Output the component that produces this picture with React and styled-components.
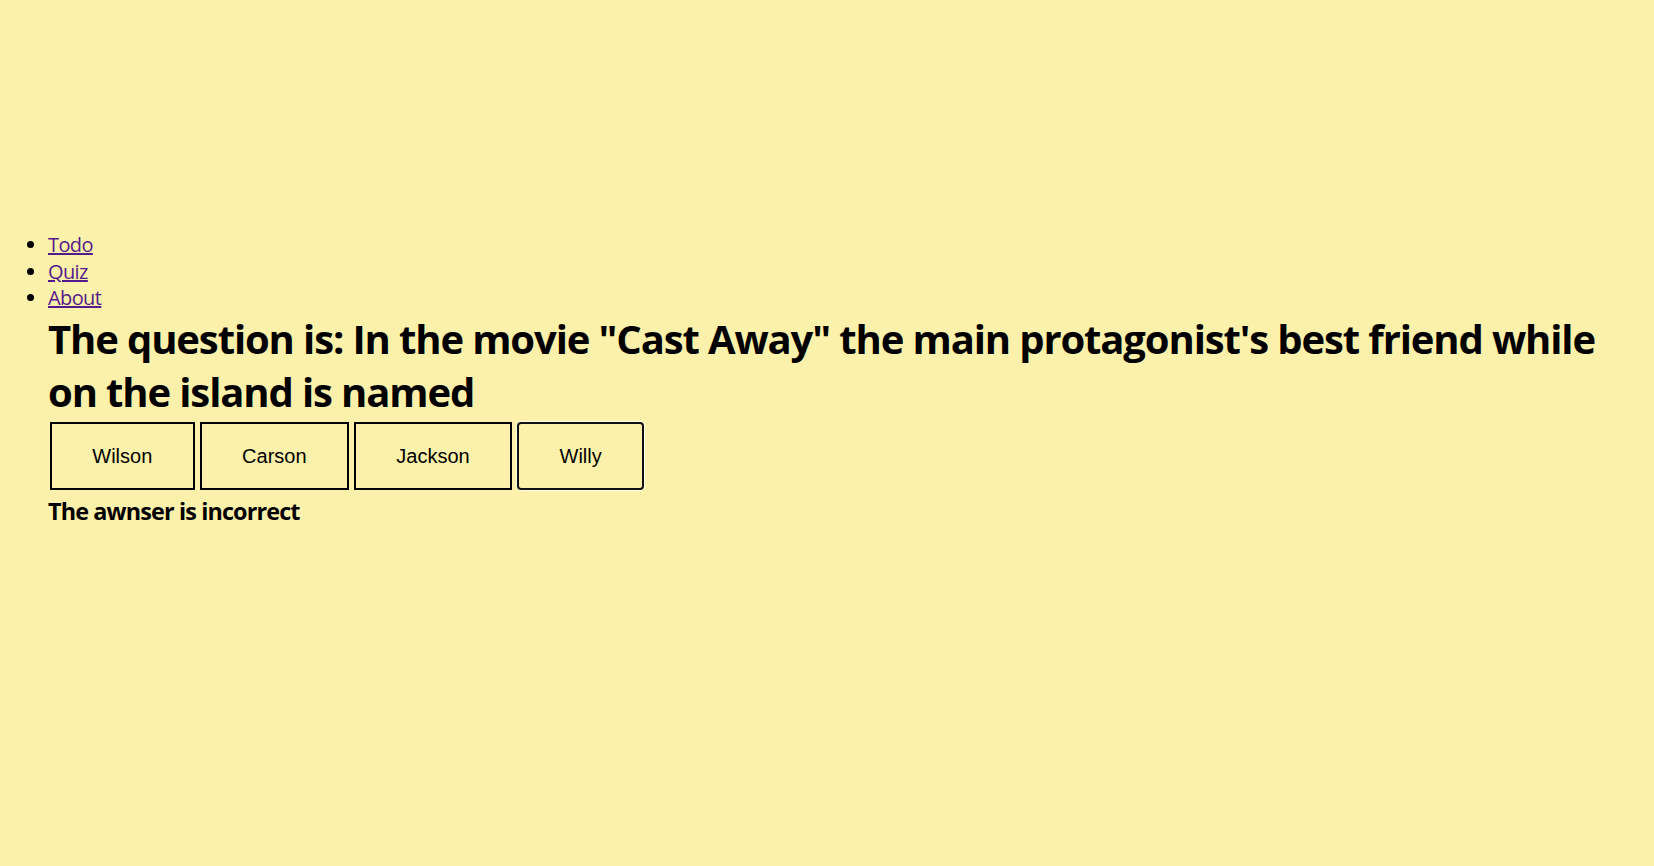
import React from "react";
import styled, { createGlobalStyle } from "styled-components";

const GlobalStyle = createGlobalStyle`
  body {
    margin: 0;
    background: #fcf1aa;
    font-family: "Open Sans", "Noto Sans", sans-serif;
    color: #000;
  }
`;

const Page = styled.div`
  min-height: 866px;
  box-sizing: border-box;
  padding: 232px 8px 8px;
`;

const NavList = styled.ul`
  margin: 0;
  padding-left: 40px;
  list-style: disc;
`;

const NavItem = styled.li`
  font-size: 20px;
  line-height: 26.6px;
`;

const NavLink = styled.a`
  color: #551a8b;
  text-decoration: underline;
  letter-spacing: -0.6px;
`;

const Quiz = styled.section`
  margin-left: 40px;
`;

const Question = styled.h1`
  margin: 0;
  font-size: 40px;
  font-weight: 700;
  line-height: 53.3px;
  letter-spacing: -1.12px;
`;

const Choices = styled.div`
  display: flex;
  gap: 5.2px;
  padding-left: 2px;
  margin-top: 4px;
`;

const Choice = styled.button`
  box-sizing: border-box;
  margin: 0;
  padding: 20.5px 40.3px;
  font-family: "Liberation Sans", Arial, sans-serif;
  font-size: 20px;
  line-height: 23px;
  color: #000;
  background: transparent;
  border: 2px solid ${(p) => (p.$focused ? "#101010" : "#000")};
  border-radius: ${(p) => (p.$focused ? "4px" : "0")};
  box-shadow: ${(p) => (p.$focused ? "0 0 0 1px rgba(255,255,255,0.85)" : "none")};
  cursor: pointer;
`;

const Result = styled.h3`
  margin: 6px 0 0;
  font-size: 23.4px;
  font-weight: 700;
  line-height: 31px;
  letter-spacing: -0.87px;
`;

const links = ["Todo", "Quiz", "About"];
const answers = ["Wilson", "Carson", "Jackson", "Willy"];

export default function App() {
  return (
    <>
      <GlobalStyle />
      <Page>
        <NavList>
          {links.map((l) => (
            <NavItem key={l}>
              <NavLink href={"#" + l.toLowerCase()}>{l}</NavLink>
            </NavItem>
          ))}
        </NavList>
        <Quiz>
          <Question>
            The question is: In the movie "Cast Away" the main protagonist's best friend while on the island is named
          </Question>
          <Choices>
            {answers.map((a) => (
              <Choice key={a} $focused={a === "Willy"}>
                {a}
              </Choice>
            ))}
          </Choices>
          <Result>The awnser is incorrect</Result>
        </Quiz>
      </Page>
    </>
  );
}
